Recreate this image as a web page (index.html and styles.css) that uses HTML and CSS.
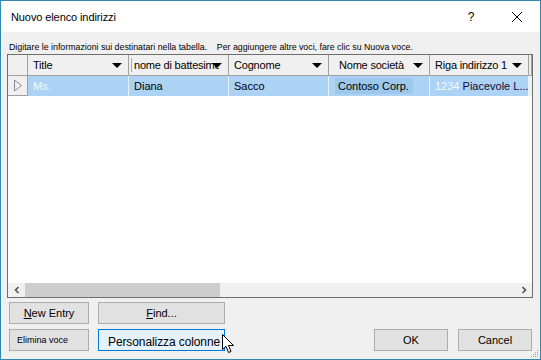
FILE: index.html
```html
<!DOCTYPE html>
<html lang="it">
<head>
    <meta charset="UTF-8">
    <meta name="viewport" content="width=device-width, initial-scale=1.0">
    <title>Nuovo elenco indirizzi</title>
    <link rel="stylesheet" href="styles.css">
</head>
<body>
    <div class="window">
        <div class="titlebar">
            <span class="title">Nuovo elenco indirizzi</span>
            <span class="help">?</span>
            <span class="close">
                <svg width="12" height="12" viewBox="0 0 12 12"><path d="M1 1L11 11M11 1L1 11" stroke="#000" stroke-width="1"/></svg>
            </span>
        </div>
        <div class="content">
            <div class="hint">Digitare le informazioni sui destinatari nella tabella.&nbsp;&nbsp;&nbsp; Per aggiungere altre voci, fare clic su Nuova voce.</div>
            <div class="grid">
                <div class="row head">
                    <div class="cell sel"></div>
                    <div class="cell"><span class="txt">Title</span><span class="arrow"></span></div>
                    <div class="cell focus"><span class="txt">nome di battesimo</span><span class="arrow"></span></div>
                    <div class="cell"><span class="txt">Cognome</span><span class="arrow"></span></div>
                    <div class="cell"><span class="txt soc">Nome società</span><span class="arrow"></span></div>
                    <div class="cell"><span class="txt">Riga indirizzo 1</span><span class="arrow"></span></div>
                    <div class="cell fill"></div>
                </div>
                <div class="row data">
                    <div class="cell sel">
                        <svg width="10" height="13" viewBox="0 0 10 13"><path d="M1.5 1L8.5 6.5L1.5 12Z" fill="none" stroke="#8a8a9a" stroke-width="1"/></svg>
                    </div>
                    <div class="cell"><span class="light">Ms.</span></div>
                    <div class="cell">Diana</div>
                    <div class="cell">Sacco</div>
                    <div class="cell"><span class="mark">Contoso Corp.</span></div>
                    <div class="cell"><span class="light">1234</span>&nbsp;<span class="street">Piacevole L...</span></div>
                    <div class="cell fill"></div>
                </div>
                <div class="empty"></div>
                <div class="hscroll">
                    <span class="sbtn">
                        <svg width="8" height="8" viewBox="0 0 8 8"><path d="M5.5 1L2.5 4L5.5 7" fill="none" stroke="#505050" stroke-width="1.6"/></svg>
                    </span>
                    <span class="thumb"></span>
                    <span class="track"></span>
                    <span class="sbtn">
                        <svg width="8" height="8" viewBox="0 0 8 8"><path d="M2.5 1L5.5 4L2.5 7" fill="none" stroke="#505050" stroke-width="1.6"/></svg>
                    </span>
                </div>
            </div>
            <div class="actions">
                <div class="col left">
                    <button class="btn"><u>N</u>ew Entry</button>
                    <button class="btn small">Elimina voce</button>
                </div>
                <div class="col mid">
                    <button class="btn"><u>F</u>ind...</button>
                    <button class="btn focused">Personalizza colonne</button>
                </div>
                <div class="col right">
                    <button class="btn">OK</button>
                    <button class="btn">Cancel</button>
                </div>
            </div>
        </div>
        <svg class="cursor" width="13" height="20" viewBox="0 0 13 20"><path d="M0.5 0.5L0.5 15.5L4 12.3L6.6 18.5L9 17.5L6.5 11.5L11.5 11.5Z" fill="#fff" stroke="#000" stroke-width="1"/></svg>
        <svg class="grip" width="10" height="10" viewBox="0 0 10 10">
            <rect x="8" y="2" width="1" height="1" fill="#a0a0a0"/>
            <rect x="6" y="4" width="1" height="1" fill="#a0a0a0"/>
            <rect x="8" y="4" width="1" height="1" fill="#a0a0a0"/>
            <rect x="4" y="6" width="1" height="1" fill="#a0a0a0"/>
            <rect x="6" y="6" width="1" height="1" fill="#a0a0a0"/>
            <rect x="8" y="6" width="1" height="1" fill="#a0a0a0"/>
            <rect x="2" y="8" width="1" height="1" fill="#a0a0a0"/>
            <rect x="4" y="8" width="1" height="1" fill="#a0a0a0"/>
            <rect x="6" y="8" width="1" height="1" fill="#a0a0a0"/>
            <rect x="8" y="8" width="1" height="1" fill="#a0a0a0"/>
        </svg>
    </div>
</body>
</html>
```

FILE: styles.css
```css
body {
    margin: 0;
    font-family: "Liberation Sans", Arial, sans-serif;
    background-color: #f0f0f0;
}

.window {
    position: relative;
    width: 541px;
    height: 360px;
    box-sizing: border-box;
    border: 1px solid #2f8aad;
    display: flex;
    flex-direction: column;
    background-color: #f0f0f0;
    color: #000;
}

.titlebar {
    height: 31px;
    background-color: #fff;
    display: flex;
    align-items: center;
    padding-left: 10px;
    font-size: 11px;
    flex-shrink: 0;
}

.title {
    flex: 1;
    letter-spacing: -0.1px;
}

.help {
    width: 46px;
    text-align: center;
    font-size: 12px;
}

.close {
    width: 46px;
    display: flex;
    justify-content: center;
}

.content {
    flex: 1;
    display: flex;
    flex-direction: column;
    padding: 0 7px 0 6px;
}

.hint {
    height: 22px;
    box-sizing: border-box;
    padding: 9px 0 0 2px;
    font-size: 8.8px;
    line-height: 12px;
    white-space: nowrap;
}

.grid {
    height: 244px;
    box-sizing: border-box;
    border: 1px solid #6e6e6e;
    background-color: #fff;
    display: flex;
    flex-direction: column;
    margin-bottom: 4px;
}

.row {
    display: grid;
    grid-template-columns: 20px 101px 100px 100px 101px 99px 1fr;
    font-size: 11px;
}

.head {
    height: 21px;
    letter-spacing: -0.2px;
}

.head .cell {
    background-color: #f0f0f0;
    border-right: 1px solid #a0a0a0;
    border-bottom: 1px solid #a0a0a0;
    display: flex;
    align-items: center;
    padding: 0 6px 0 5px;
    overflow: hidden;
    position: relative;
}

.head .cell.sel,
.head .cell.fill {
    padding: 0;
}

.head .focus::before {
    content: "";
    position: absolute;
    left: 2px;
    top: 3px;
    bottom: 3px;
    border-left: 1px solid #e9a34c;
}

.txt {
    flex: 1;
    min-width: 0;
    white-space: nowrap;
    overflow: hidden;
}

.soc {
    padding-left: 5px;
}

.arrow {
    flex-shrink: 0;
    width: 0;
    height: 0;
    margin-left: 4px;
    border-left: 5px solid transparent;
    border-right: 5px solid transparent;
    border-top: 5px solid #000;
}

.focus .arrow {
    margin-left: -7px;
}

.data {
    height: 20px;
}

.data .cell {
    background-color: #acd2f6;
    border-right: 1px solid #e4f0fb;
    display: flex;
    align-items: center;
    padding-left: 5px;
    white-space: nowrap;
    overflow: hidden;
}

.data .cell.sel {
    background-color: #f0f0f0;
    border-right: 1px solid #a0a0a0;
    border-bottom: 1px solid #a0a0a0;
    padding-left: 5px;
}

.data .cell.fill {
    background-color: #f0f0f0;
    border-right: 0;
    padding: 0;
}

.light {
    color: #f4f9ff;
}

.mark {
    background-color: #9cc8ee;
    padding: 2px 4px 2px 3px;
    margin-left: 1px;
}

.street {
    color: #14083a;
}

.empty {
    flex: 1;
}

.hscroll {
    height: 14px;
    display: flex;
    background-color: #f0f0f0;
}

.sbtn {
    width: 17px;
    display: flex;
    align-items: center;
    justify-content: center;
}

.thumb {
    width: 195px;
    background-color: #cdcdcd;
}

.track {
    flex: 1;
}

.actions {
    display: flex;
    padding: 0 1px 0 2px;
}

.col {
    display: flex;
    flex-direction: column;
    gap: 5px;
}

.left {
    width: 80px;
}

.mid {
    width: 127px;
    margin-left: 9px;
}

.right {
    flex: 1;
    flex-direction: row;
    justify-content: flex-end;
    align-items: flex-end;
    gap: 10px;
}

.btn {
    height: 22px;
    box-sizing: border-box;
    border: 1px solid #adadad;
    background-color: #e1e1e1;
    font-family: "Liberation Sans", Arial, sans-serif;
    font-size: 11px;
    color: #000;
    padding: 0;
    white-space: nowrap;
}

.right .btn {
    width: 74px;
}

.btn.small {
    font-size: 9px;
    text-align: left;
    padding-left: 7px;
}

.btn.focused {
    background-color: #e5f1fb;
    border-color: #0078d7;
    font-size: 12px;
    text-align: left;
    padding: 4px 0 0 9px;
    letter-spacing: -0.1px;
    overflow: visible;
}

.cursor {
    position: absolute;
    left: 221px;
    top: 333px;
}

.grip {
    position: absolute;
    right: 1px;
    bottom: 1px;
}
```
